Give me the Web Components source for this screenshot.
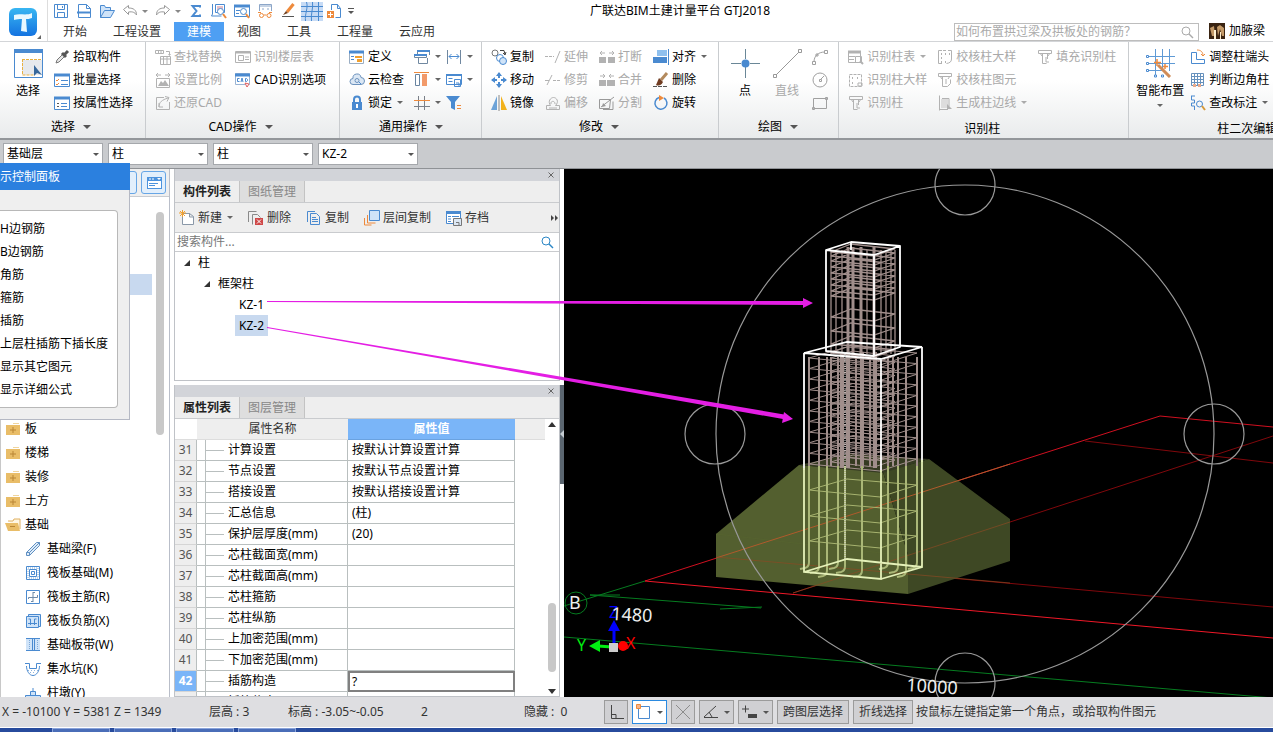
<!DOCTYPE html>
<html lang="zh-CN">
<head>
<meta charset="utf-8">
<meta name="viewport" content="width=device-width, initial-scale=1">
<title>广联达BIM土建计量平台 GTJ2018</title>
<style>
  html, body {
    margin: 0;
    height: 100%;
    overflow: hidden;
    background: #fff;
    color: #000;
    font: 12px/16px "Noto Sans", "Noto Sans CJK SC", sans-serif;
  }
</style>
</head>
<body>
<bim-app></bim-app>

<script>
(() => {
  // 16x16 artwork unless a viewBox is listed in iconBoxes
  const B = "#4a8ad0";
  const L = "#cfe3f8";
  const O = "#ee8a3c";
  const G = "#b2b2b2";
  const D = "#555";

  const icons = {
    save: `<path d="M1.5 1.5h13v13h-13zM4.5 1.5v5h7v-5M4.5 14.5v-5h7v5M9.5 3v2" stroke="${B}"/>`,
    page: `<path d="M2.5 1.5h8l4 4v9h-12zM10.5 1.5v4h4" stroke="${B}"/><path d="M1 9.5h14" stroke="${B}" stroke-width="2"/>`,
    open: `<path d="M1.5 14.5v-12h4l1 2h5v3M1.5 14.5l4-7h10l-4 7z" stroke="${B}" fill="${L}"/>`,
    undo: `<path d="M1.500 6.500l5-4v2.500c5 0 8 2 8 7-2-3-4-3.500-8-3v2.500z" stroke="#999"/>`,
    redo: `<path d="M14.500 6.500l-5-4v2.500c-5 0-8 2-8 7 2-3 4-3.500 8-3v2.500z" stroke="#999"/>`,
    sum: `<path d="M12 4.500V3H4.500l4 5-4 5H12v-1.500" stroke="${B}" stroke-width="2"/>`,
    measure: `<path d="M1.500 1v10l-1 2h10M4.500 1.500h9v8h-9z" stroke="${B}"/><path d="M6 4h6M6 6h6M6 8h4" stroke="#cc8090"/><circle cx="9.500" cy="8.500" r="3" stroke="${B}" fill="#fff"/><path d="M12 11l3 4" stroke="${O}" stroke-width="2"/>`,
    find: `<path d="M.5 2.500h15v11H.5z" stroke="${B}"/><path d="M0 3h16" stroke="${B}" stroke-width="3"/><path d="M2 7.500h4M2 10.500h3" stroke="${B}"/><circle cx="9.500" cy="8.500" r="3" stroke="${B}" fill="#fff"/><path d="M12 11l3 4" stroke="${O}" stroke-width="2"/>`,
    view: `<path d="M2.500 8V1.500h12V8M2 3h12M5 6h2M10 6h2" stroke="#8ca6c8"/><circle cx="4.500" cy="12.500" r="2" stroke="${O}"/><circle cx="12" cy="12.500" r="2" stroke="${O}"/><path d="M7 12h2.500M1 9.500h3M12 9.500h3" stroke="${O}"/>`,
    brush: `<path d="M13.500 1L7 9" stroke="${O}" stroke-width="3"/><path d="M6 8l2 2-5 2z" fill="#704020"/><path d="M2 13.500h12" stroke="${D}"/>`,
    mesh: `<path d="M0 4.500h22M0 9.500h22M0 14.500h22M5.500 0c2 6-2 12-1 19M11.500 0c1 6-2 12-1 19M17.500 0v19" stroke="${B}"/>`,
    addpage: `<path d="M5.500 7V1.500h6M9.500 14.500h5v-9l-3-4v4h3" stroke="${B}"/><path d="M1 8h7v7H1z" fill="${O}"/><path d="M4.500 9v5M2 11.500h5" stroke="#fff"/>`,
    caretbar: `<path d="M3 5.500h6" stroke="${D}"/><path d="M3 8h6l-3 3z" fill="${D}"/>`,

    select: `<path d="M.5.500h28v28H.5z" stroke="${B}" fill="#fff"/><path d="M0 0h29v4H0z" fill="${B}"/><path d="M8 11h20v15H8z" fill="#e6e9ed"/><path d="M8 10.500h20M8.500 10v16h12" stroke="#e8b040" stroke-dasharray="3 1"/><path d="M20 16v11l3-3 5 2z" fill="#37689c"/>`,
    dropper: `<path d="M2 14l1-3 6-6 2 2-6 6z" stroke="#777" fill="#e7e7e7"/><path d="M8 4l4 4M10 6l4-4" stroke="#555" stroke-width="3"/>`,
    batch: `<path d="M.5 2.500h15v12H.5z" stroke="${B}" fill="#fff"/><path d="M0 3h16" stroke="${B}" stroke-width="3"/><path d="M2 8l1 1 2-2M2 12l1 1 2-2" stroke="${O}"/><path d="M7 8.500h7M7 12.500h7" stroke="${B}"/>`,
    attr: `<path d="M.5 2.500h15v12H.5z" stroke="${B}" fill="#fff"/><path d="M0 3h16" stroke="${B}" stroke-width="3"/><path d="M3 8.500h2M3 11.500h2" stroke="${D}"/><path d="M7 8.500h6M7 11.500h6" stroke="${B}"/>`,
    replace: `<path d="M.5 1.500h8v3h-8zM3.500 2v2M6 2v2M11 2.500h3.500v3M5.500 7.500h10v8h-10zM5 10h10M8.500 8v7M12 8v7" stroke="${G}"/><path d="M13 5h3l-1.500 2z" fill="${G}"/>`,
    scale: `<path d="M1 3h5M10 3h5M3 1L1 3l2 2M13 1l2 2-2 2M1.500 6.500h13v9h-13z" stroke="${G}"/><path d="M3 14l3-5 2 2 2-3 4 6z" fill="${G}"/>`,
    restore: `<path d="M9 2.500H1.500v12h13V7M4 12c0-5 3-7 9-9M10 1.500l4 1-2 4M4 8v4h4" stroke="${G}"/>`,
    floors: `<path d="M.5 2.500h15v11H.5z" stroke="${G}"/><path d="M1 3.500h14" stroke="${G}" stroke-width="2"/><path d="M3.500 6.500h5v5h-5zM10 8h4M10 10.500h4" stroke="${G}"/>`,
    cadopt: `<path d="M.5 1.500h14v11H.5z" stroke="#9ab4d4" fill="#fff"/><path d="M0 3h15" stroke="${B}" stroke-width="3"/><path d="M4.500 6.500h-2v3h2M6 10l1-4 1 4M10.500 6.500v3h1l1-1v-1l-1-1z" stroke="${B}"/><path d="M10 11l4 1-2 3z" stroke="#e06060" fill="#fff"/>`,
    define: `<path d="M.5 2.500h14v12H.5z" stroke="#9aaec4" fill="#fff"/><path d="M0 3h15" stroke="${B}" stroke-width="3"/><path d="M2 7.500h3M2 10.500h3" stroke="${B}"/><path d="M6 7h7v2H6zM8 10h5v3H8z" fill="#f0a030"/>`,
    cloud: `<path d="M4 12.500a3 3 0 010-6 4 4 0 018-1 3.500 3.500 0 010 7z" stroke="#6c92bd" fill="#dbe7f4"/><circle cx="8" cy="8.500" r="2" stroke="#6c92bd"/><path d="M10 10l2 2" stroke="${B}"/>`,
    lock: `<path d="M5 8V4.500a3 3 0 016 0V8" stroke="${B}" stroke-width="2"/><path d="M3 7h10v8H3z" fill="${B}"/><path d="M8 9v4" stroke="#fff" stroke-width="2"/>`,
    windows: `<path d="M3.500 5V1.500h12V6M.5 5.500h12v3H.5zM4.500 9v5.500h9V9" stroke="#7088a0"/><path d="M3 2h13M0 6h13" stroke="${B}" stroke-width="2"/>`,
    dims: `<path d="M1.500 1v14M14.500 1v14" stroke="#7088a0"/><path d="M3 7.500h10M5.500 5L3 7.500l2.500 2.500M10.500 5L13 7.500 10.500 10" stroke="${B}"/>`,
    columns: `<path d="M1.500 2.500h4v11h-4z" stroke="#6884a0"/><path d="M8 2h5v12H8z" fill="#f29a6a"/><path d="M0 .5h15" stroke="${O}"/>`,
    tablesave: `<path d="M.5 2.500h15v10H.5z" stroke="${B}" fill="#fff"/><path d="M0 3h16" stroke="${B}" stroke-width="2"/><path d="M2.500 6.500h4M2.500 9.500h4M8.500 7.500h6v7h-6zM10 11h3v3" stroke="${B}"/>`,
    gridsmall: `<path d="M4.500 1v14M10.500 1v14M0 11.500h16" stroke="#7a7f88"/><path d="M0 5.500h16" stroke="${O}"/>`,
    filter: `<path d="M0 1h14L9 7v8l-4-2V7z" fill="${B}"/><path d="M11 10.500h4M11 13.500h4" stroke="${O}"/>`,
    copy2: `<circle cx="4" cy="4" r="3" stroke="#777"/><circle cx="9" cy="9" r="3.500" stroke="${B}"/><circle cx="12" cy="12" r="3.500" stroke="${B}" fill="${L}"/><path d="M9 1.500l4 0 1 4M12 4l2 2 1-3" stroke="#444"/>`,
    move: `<path d="M8 1v5M8 10v5M1 8h5M10 8h5" stroke="${B}" stroke-width="2"/><path d="M5 4l3-4 3 4zM5 12l3 4 3-4zM4 5L0 8l4 3zM12 5l4 3-4 3z" fill="${B}"/>`,
    mirror: `<path d="M6 1v14H0z" fill="#6da3d8"/><path d="M10 1v14h6z" fill="#f1b11c"/><path d="M8 0v16" stroke="#888"/>`,
    extend: `<path d="M0 7.500h9" stroke="${G}" stroke-dasharray="3 1"/><path d="M10 14L15 2" stroke="${G}"/>`,
    trim: `<path d="M2 13L7 3M0 8.500h4" stroke="${G}"/><path d="M8 8.500h8" stroke="${G}" stroke-dasharray="3 1"/>`,
    offset: `<path d="M1.500 10.500h4c-3-4 0-8 3-8s6 4 2 8h4v4h-13zM4 13h8M6 9c-1-3 4-4 4 0" stroke="${G}"/>`,
    cut: `<path d="M0 8h7v6H0zM9 8h7v6H9z" fill="${G}"/><path d="M1 4h5M10 4h5M3 2L1 4l2 2M13 2l2 2-2 2" stroke="${G}"/>`,
    merge: `<path d="M0 8h7v6H0zM8 8h8v6H8z" fill="${G}"/><path d="M1 4h5M10 4h5M4 2l2 2-2 2M12 2l-2 2 2 2" stroke="${G}"/>`,
    split: `<path d="M.5 4.500h11l-1 9H.5zM2 12L15 2M4 14.500h10v-8" stroke="#999"/><path d="M4 8l3 3-4 1z" fill="#999"/>`,
    align: `<path d="M4 1h10v6H4z" fill="#8fc0ee"/><path d="M0 8h14v6H0z" fill="${B}"/><path d="M15.500 0v16" stroke="${B}"/>`,
    erase: `<path d="M14 1L8 8" stroke="#b38a5d" stroke-width="3"/><path d="M6 6l4 4c-2 4-5 4-7 3z" fill="#703c22"/><path d="M0 14.500h15" stroke="#555" stroke-dasharray="4 1"/>`,
    rotate: `<path d="M6 2.500a6 6 0 105 .5" stroke="${B}" stroke-width="1.500"/><path d="M6 0l5 3-5 3z" fill="${O}"/>`,
    point: `<path d="M14.500 0v10M14.500 18v11M0 14.500h10M19 14.500h10" stroke="#6a8797"/><circle cx="14.500" cy="14.500" r="4" fill="${B}"/>`,
    line: `<path d="M3 26L26 3M.5 25.500h3v3h-3zM25.500.500h3v3h-3z" stroke="#999"/>`,
    arc: `<path d="M2 13c0-6 4-10 11-10M.5 12.500h3v3h-3zM12.500 1.500h3v3h-3zM4 5h2v2H4z" stroke="#a0a0a0"/>`,
    circle: `<circle cx="8" cy="8" r="7" stroke="#a0a0a0"/><path d="M7.500 7.500h2v2h-2zM9 7l3-3" stroke="#a0a0a0"/>`,
    rect: `<path d="M1.500 3.500h13v10h-13zM.5 12.500h2v2h-2zM13.500 2.500h2v2h-2z" stroke="#a0a0a0"/>`,
    coltable: `<path d="M.5 2.500h12v11H.5zM0 7.500h7M0 10.500h6" stroke="${G}"/><path d="M0 3h13" stroke="${G}" stroke-width="3"/><path d="M7.500 7.500h6v6h-6z" stroke="${G}"/><path d="M12 12l3 3" stroke="${G}" stroke-width="2"/>`,
    colsample: `<path d="M1.500 2.500h12v12h-12z" stroke="${G}" stroke-dasharray="3 1"/><path d="M4 6h1M9 6h1M4 11h1" stroke="${G}" stroke-width="2"/><path d="M10 11h4v3h-4z" stroke="${G}"/>`,
    coltee: `<path d="M1.500 1.500h13v3h-13zM5.500 5v9.500h4M10.500 5v5M3 4l2 3M13 4l-2 3M9 8v5h3" stroke="${G}"/>`,
    coltee2: `<path d="M1.500 1.500h13v3h-13zM5.500 5v9.500h5l3-3v-4M9 7v5M3 4l2 3M13 4l-2 3" stroke="${G}"/>`,
    checksample: `<path d="M5 1.500H1.500v13H5M11 1.500h3.500V10c0 3-2 4-5 4.500M6 1.500h3" stroke="${G}"/><path d="M4 5h1M8 5h1M12 5h1M4 9h1M4 13h1M8 13h1" stroke="${G}" stroke-width="2"/>`,
    genline: `<path d="M2.500.500v15M2 14.500h9M5 3.500h7v8" stroke="${G}"/><path d="M4 4h7v9H4z" fill="#ddd"/><path d="M10 9l5 5h-5z" fill="${G}"/>`,
    smart: `<path d="M9.500 0v26M16.500 0v20M23.500 0v22M1 7.500h28M1 14.500h28M1 21.500h18" stroke="#5f9ad5"/><path d="M.5 6.500h2v2h-2zM.5 13.500h2v2h-2zM.5 20.500h2v2h-2zM8.500 26h2v2h-2zM15.500 26h2v2h-2z" fill="#fff" stroke="${B}"/><path d="M12 16l12 12" stroke="#d08c58" stroke-width="3"/><path d="M11 10v7M8 13.500h7M19 15v5M17 17.500h5" stroke="${O}" stroke-width="1.500"/>`,
    adjust: `<path d="M1.500 3.500h5v7h8v4h-13z" stroke="${B}"/><path d="M7 1c4 0 6 2 6 6M11 5l2 2 2-2" stroke="${O}"/>`,
    corner: `<path d="M1.500 1.500h12v12h-12zM4.500 1v12M7.500 1v12M10.500 1v12M1 4.500h12M1 7.500h12M1 10.500h12" stroke="#6691bd"/><path d="M3 12h3v3H3zM8 12h3v3H8z" fill="#e8a98a"/>`,
    note: `<path d="M1.500 1v4h3v3h-3v3h3v4M1 1h4" stroke="${B}"/><circle cx="9.500" cy="9" r="3" stroke="${B}"/><path d="M12 11l3 4" stroke="#d79a3a" stroke-width="2"/>`,

    newdoc: `<path d="M3.500 3.500h7l4 3v8h-11zM10.500 3v4h4" stroke="#8a98a8" fill="#fff"/><path d="M0 3h7M3.500 0v7M1 1l5 5M6 1L1 6" stroke="#f0a030"/>`,
    deldoc: `<path d="M.5 12V1.500h8M4.500 14.500v-10h5l3 3" stroke="#8a8a8a"/><path d="M7 8h8v7H7z" fill="#cf4848"/><path d="M9 9.500l4 4M13 9.500l-4 4" stroke="#fff"/>`,
    copydoc: `<path d="M1.500 12V1.500H9M4.500 3.500h6l3 3v8h-9zM6 7.500h4M6 9.500h6M6 11.500h6" stroke="${B}"/>`,
    layercopy: `<path d="M5.500.5h10v10h-10z" stroke="${B}" fill="${L}"/><path d="M3.500 5v8h8M.5 8v7h7" stroke="${O}"/>`,
    archive: `<path d="M.5 1.500h14v12H.5z" stroke="${B}" fill="#fff"/><path d="M0 2.500h15" stroke="${B}" stroke-width="3"/><path d="M2 6.500h3M2 9h3M2 11.500h3M6 6.500h7" stroke="${B}"/><path d="M7.500 8.500h8v7h-8zM10 12.500h3v3" stroke="#777" fill="#dde8f4"/>`,
    search: `<circle cx="7" cy="7" r="4" stroke="currentColor"/><path d="M10 10l4 4" stroke="currentColor" stroke-width="1.500"/>`,
    folder: `<path d="M1 4h14v10H1z" fill="#e9bd68"/><path d="M8 2h6v1H8z" fill="#f0d59d"/><path d="M8 6v6M5 9h6" stroke="#b98534"/>`,
    folderopen: `<path d="M3 4h5l1-2h6v10" stroke="#e0b060" fill="#fff6e2"/><path d="M0 6h13l2 8H3z" fill="#e9bd68"/><path d="M5 9.500h5" stroke="#b98534"/>`,
    beam: `<path d="M1.500 14.500v-3l10-10h3v3l-10 10zM1.500 11.500h3v3M4.500 11.500l10-10" stroke="#5f8fc2" fill="#e0edf9"/>`,
    raft: `<path d="M1.500 1.500h13v13h-13zM4.500 4.500h7v7h-7z" stroke="${B}"/><path d="M3 3h10v10H3z" stroke="#7faad8" stroke-dasharray="1 1"/><path d="M6.500 6.500h3v3h-3z" stroke="${B}"/>`,
    rebar: `<path d="M1.500 1.500h13v13h-13z" stroke="${B}"/><path d="M8 3v10M3.500 10V8.500h9V6M8 3.500h2M6 12.500h2" stroke="#6f8ba8"/>`,
    negbar: `<path d="M3.500 3.500v-2h12v12h-2M1.500 3.500h12v11h-12z" stroke="${B}" fill="${L}"/><path d="M5.500 12V6h-2M9.500 12V6h2M3 10.500h9" stroke="${B}"/>`,
    strip: `<path d="M1 2h14v11H1z" fill="${L}"/><path d="M1 1.500h14M1 13.500h14M7.500 2v11M9.500 2v11" stroke="${B}"/><path d="M4.500 3v10M12.500 3v10" stroke="#7faad8" stroke-dasharray="1 1"/>`,
    pit: `<path d="M0 2.500h4.500v5h7v-5H16M1.500 5c0 5 3 9.500 6.500 9.500s6.500-4.500 6.500-9.500" stroke="${B}"/><path d="M3 9.500h10M5 11.500h6" stroke="#8fb5dd" stroke-dasharray="1 2"/>`,
    pier: `<path d="M.5 10.500h15v4H.5zM5.500 10V6.500h5V10M8 3v3" stroke="${B}" fill="${L}"/>`,
    panel: `<path d="M1 2h15v12H1z" fill="#4d93dd"/><path d="M2 6h13v7H2z" fill="#fff"/><path d="M3 4h2M6 4h2" stroke="#fff"/><path d="M11 3h4l-2 2z" fill="#fff"/><path d="M3 8.500h9M3 10.500h6" stroke="#4d93dd"/>`,
    ortho: `<path d="M3.500 1v13.500H16M4 10.500h4v4" stroke="#444"/>`,
    box: `<path d="M2.500 2.500h11v12h-11z" stroke="${B}"/><path d="M.5.500h4v4h-4z" fill="#f8b48a" stroke="${O}"/>`,
    cross: `<path d="M1 1l14 14M15 1L1 15" stroke="#8c8c8c"/>`,
    angle: `<path d="M1 13.500h14M1 13L13 2M6 8l3 5" stroke="#444"/>`,
    plusbar: `<path d="M0 5h7M3.500 1.500v7" stroke="#444"/><path d="M6 10h9v4H6z" fill="#444"/>`
  };

  const iconBoxes = {
    mesh: "0 0 22 19",
    caretbar: "0 0 12 16",
    select: "0 0 29 29",
    point: "0 0 29 29",
    line: "0 0 29 29",
    smart: "0 0 29 29"
  };

  const define = (name, render) => {
    customElements.define(name, class extends HTMLElement {
      connectedCallback() {
        if (this.shadowRoot) return;
        this.attachShadow({ mode: "open" }).innerHTML = render(this);
      }
    });
  };

  define("bim-icon", (el) => {
    const name = el.getAttribute("name");
    const box = iconBoxes[name] || "0 0 16 16";
    const [, , w, h] = box.split(" ");
    return `
      <style>
        :host { display: block; flex: none; }
        svg { display: block; }
      </style>
      <svg width="${w}" height="${h}" viewBox="${box}" fill="none" aria-hidden="true">${icons[name]}</svg>`;
  });

  define("tool-button", (el) => {
    const icon = el.getAttribute("icon");
    const off = el.hasAttribute("off");
    return `
      <style>
        :host { display: block; flex: none; }
        button {
          display: flex;
          align-items: center;
          gap: 3px;
          padding: 0;
          border: 0;
          background: none;
          color: ${off ? "#a9a9a9" : "inherit"};
          font: inherit;
          white-space: nowrap;
        }
        :host([big]) button { flex-direction: column; gap: 5px; margin: auto; }
        .caret { margin: 0 0 0 2px; border: 3px solid transparent; border-top-color: #666; border-bottom: 0; }
        :host([big]) .caret { margin: 0; }
        :host([off]) .caret { border-top-color: #aaa; }
      </style>
      <button ${off ? "disabled" : ""} aria-label="${el.textContent.trim() || icon}">
        <bim-icon name="${icon}"></bim-icon>
        ${el.textContent.trim() ? "<slot></slot>" : ""}
        ${el.hasAttribute("drop") ? '<span class="caret"></span>' : ""}
      </button>`;
  });

  define("ribbon-group", (el) => `
    <style>
      :host {
        display: flex;
        flex: none;
        flex-direction: column;
        box-sizing: border-box;
        padding: 3px var(--end, 11px) 0 9px;
        border-right: 1px solid #c9cccf;
      }
      :host(:last-child) { border-right: 0; padding-left: 7px; }
      .tools { display: flex; gap: var(--gap, 11px); height: 72px; }
      .name { display: flex; align-items: center; justify-content: center; gap: 8px; padding-top: 2px; }
      :host(:not([more])) .name { padding-top: 4px; }
      .name i { border: 4px solid transparent; border-top-color: #555; border-bottom: 0; }
    </style>
    <div class="tools"><slot></slot></div>
    <div class="name">${el.getAttribute("label")}${el.hasAttribute("more") ? "<i></i>" : ""}</div>`);

  define("ribbon-column", () => `
    <style>
      :host { display: grid; grid-template-rows: repeat(3, 23px); align-items: center; align-content: start; }
    </style>
    <slot></slot>`);

  define("app-header", () => {
    const tabs = ["开始", "工程设置", "建模", "视图", "工具", "工程量", "云应用"];
    return `
      <style>
        :host { display: grid; grid-template-columns: 48px 1fr; height: 41px; border-bottom: 1px solid #d3d5d8; background: #fff; }
        .logo { padding: 7px 0 0 8px; border-right: 1px solid #ddd; }
        .logo svg { display: block; }
        .quick, .end { display: flex; align-items: center; }
        .quick { height: 22px; padding-left: 5px; gap: 7px; }
        .end { gap: 3px; margin-left: -2px; }
        .hot { background: #c7dbf5; }
        .caret { border: 3px solid transparent; border-top-color: #888; border-bottom: 0; margin-left: -3px; }
        h1 { margin: 0 0 0 226px; font: inherit; white-space: nowrap; }
        .row { display: flex; height: 19px; padding-left: 2px; }
        nav { display: flex; flex: 1; }
        nav a { padding: 2px 13px 1px; color: #333; text-decoration: none; white-space: nowrap; }
        nav a[aria-current] { background: #4e9ff3; color: #fff; }
        .ask { display: flex; box-sizing: border-box; width: 245px; height: 18px; border: 1px solid #bdbdbd; margin-top: 1px; color: #aaa; }
        input { flex: 1; min-width: 0; padding: 0 1px; border: 0; background: none; font: inherit; }
        input::placeholder { color: #aaa; opacity: 1; }
        .ask bim-icon { margin-right: 3px; }
        .user { display: flex; gap: 4px; padding: 1px 8px 0 10px; }
      </style>
      <div class="logo">
        <svg width="34" height="33" viewBox="0 0 34 33">
          <defs><linearGradient id="g" x2="0" y2="1"><stop stop-color="#38b6f2"/><stop offset="1" stop-color="#1473e0"/></linearGradient></defs>
          <rect x="1" y="1" width="28" height="28" rx="6" fill="url(#g)"/>
          <path d="M6 8c6-2 12 1 18-2v5c-3 1-4 1-6 1l1 13-6-1 1-12c-3 0-5 0-8 1z" fill="#e8f8ff"/>
          <path d="M33 28v4h-4z" fill="#666"/>
        </svg>
      </div>
      <div>
        <div class="quick">
          <bim-icon name="save"></bim-icon><bim-icon name="page"></bim-icon><bim-icon name="open"></bim-icon>
          <bim-icon name="undo"></bim-icon><span class="caret"></span>
          <bim-icon name="redo"></bim-icon><span class="caret"></span>
          <bim-icon name="sum"></bim-icon><bim-icon name="measure"></bim-icon><bim-icon name="find"></bim-icon>
          <bim-icon name="view"></bim-icon><bim-icon name="brush"></bim-icon>
          <div class="end">
            <bim-icon class="hot" name="mesh"></bim-icon><bim-icon name="addpage"></bim-icon>
            <bim-icon name="caretbar"></bim-icon>
          </div>
          <h1>广联达BIM土建计量平台 GTJ2018</h1>
        </div>
        <div class="row">
          <nav>${tabs.map((t) => `<a href="#"${t === "建模" ? ' aria-current="page"' : ""}>${t}</a>`).join("")}</nav>
          <label class="ask"><input aria-label="搜索帮助" placeholder="如何布置拱过梁及拱板处的钢筋？"><bim-icon name="search"></bim-icon></label>
          <div class="user">
            <svg width="16" height="16" viewBox="0 0 16 16"><path d="M0 0h16v16H0z" fill="#3a2412"/><path d="M1 5l4-2 1 10H3zM8 4l3-2 4 3v8h-2l-2-7-2 7z" fill="#c49a68"/><path d="M5 7h2v9H5zM11 9h1v7h-1z" fill="#fff0d0"/></svg>
            <span>加腋梁</span>
          </div>
        </div>
      </div>`;
  });

  define("app-ribbon", () => `
    <style>
      :host {
        display: flex;
        height: 96px;
        overflow: hidden;
        border-bottom: 2px solid #93969a;
        background: linear-gradient(#fff 40%, #e9ebec);
      }
      .pair { display: flex; gap: 5px; }
      .big { padding-top: 4px; min-width: 34px; }
      .wide { min-width: 38px; }
      .last { width: 48px; }
    </style>
    <ribbon-group label="选择" more style="--gap: 7px; --end: 12px">
      <div class="big wide"><tool-button big icon="select">选择</tool-button></div>
      <ribbon-column>
        <tool-button icon="dropper">拾取构件</tool-button>
        <tool-button icon="batch">批量选择</tool-button>
        <tool-button icon="attr">按属性选择</tool-button>
      </ribbon-column>
    </ribbon-group>
    <ribbon-group label="CAD操作" more style="--gap: 13px; --end: 13px">
      <ribbon-column>
        <tool-button off icon="replace">查找替换</tool-button>
        <tool-button off icon="scale">设置比例</tool-button>
        <tool-button off icon="restore">还原CAD</tool-button>
      </ribbon-column>
      <ribbon-column>
        <tool-button off icon="floors">识别楼层表</tool-button>
        <tool-button icon="cadopt">CAD识别选项</tool-button>
      </ribbon-column>
    </ribbon-group>
    <ribbon-group label="通用操作" more style="--gap: 10px; --end: 8px">
      <ribbon-column>
        <tool-button icon="define">定义</tool-button>
        <tool-button icon="cloud">云检查</tool-button>
        <tool-button drop icon="lock">锁定</tool-button>
      </ribbon-column>
      <div class="pair">
        <ribbon-column>
          <tool-button drop icon="windows"></tool-button>
          <tool-button drop icon="columns"></tool-button>
          <tool-button drop icon="gridsmall"></tool-button>
        </ribbon-column>
        <ribbon-column>
          <tool-button drop icon="dims"></tool-button>
          <tool-button drop icon="tablesave"></tool-button>
          <tool-button icon="filter"></tool-button>
        </ribbon-column>
      </div>
    </ribbon-group>
    <ribbon-group label="修改" more>
      <ribbon-column>
        <tool-button icon="copy2">复制</tool-button>
        <tool-button icon="move">移动</tool-button>
        <tool-button icon="mirror">镜像</tool-button>
      </ribbon-column>
      <ribbon-column>
        <tool-button off icon="extend">延伸</tool-button>
        <tool-button off icon="trim">修剪</tool-button>
        <tool-button off icon="offset">偏移</tool-button>
      </ribbon-column>
      <ribbon-column>
        <tool-button off icon="cut">打断</tool-button>
        <tool-button off icon="merge">合并</tool-button>
        <tool-button off icon="split">分割</tool-button>
      </ribbon-column>
      <ribbon-column>
        <tool-button drop icon="align">对齐</tool-button>
        <tool-button icon="erase">删除</tool-button>
        <tool-button icon="rotate">旋转</tool-button>
      </ribbon-column>
    </ribbon-group>
    <ribbon-group label="绘图" more style="--gap: 8px; --end: 10px">
      <div class="big"><tool-button big icon="point">点</tool-button></div>
      <div class="big"><tool-button big off icon="line">直线</tool-button></div>
      <ribbon-column>
        <tool-button off icon="arc"></tool-button>
        <tool-button off icon="circle"></tool-button>
        <tool-button off icon="rect"></tool-button>
      </ribbon-column>
    </ribbon-group>
    <ribbon-group label="识别柱" style="--gap: 10px; --end: 12px">
      <ribbon-column>
        <tool-button off drop icon="coltable">识别柱表</tool-button>
        <tool-button off icon="colsample">识别柱大样</tool-button>
        <tool-button off icon="coltee">识别柱</tool-button>
      </ribbon-column>
      <ribbon-column>
        <tool-button off icon="checksample">校核柱大样</tool-button>
        <tool-button off icon="coltee2">校核柱图元</tool-button>
        <tool-button off drop icon="genline">生成柱边线</tool-button>
      </ribbon-column>
      <ribbon-column>
        <tool-button off icon="coltee">填充识别柱</tool-button>
      </ribbon-column>
    </ribbon-group>
    <ribbon-group label="柱二次编辑" style="--gap: 6px; width: 240px">
      <div class="big last"><tool-button big drop icon="smart">智能布置</tool-button></div>
      <ribbon-column>
        <tool-button icon="adjust">调整柱端头</tool-button>
        <tool-button icon="corner">判断边角柱</tool-button>
        <tool-button drop icon="note">查改标注</tool-button>
      </ribbon-column>
    </ribbon-group>`);

  define("option-bar", () => {
    const values = [["楼层", "基础层"], ["构件类型", "柱"], ["构件分类", "柱"], ["构件", "KZ-2"]];
    return `
      <style>
        :host { display: flex; gap: 5px; padding: 3px; height: 22px; border-bottom: 1px solid #8f9296; background: #c9cbce; }
        label { display: grid; width: 100px; align-items: center; }
        select, i { grid-area: 1 / 1; }
        select {
          box-sizing: border-box;
          width: 100%;
          height: 22px;
          padding: 0 3px;
          border: 1px solid #a5a8ac;
          border-radius: 0;
          appearance: none;
          background: #fff;
          color: #000;
          font: inherit;
        }
        i { justify-self: end; margin-right: 4px; border: 3px solid transparent; border-top-color: #555; border-bottom: 0; pointer-events: none; }
      </style>
      ${values.map(([n, v]) => `<label><select aria-label="${n}"><option>${v}</option></select><i></i></label>`).join("")}`;
  });

  define("display-panel", () => {
    const rows = ["H边钢筋", "B边钢筋", "角筋", "箍筋", "插筋", "上层柱插筋下插长度", "显示其它图元", "显示详细公式"];
    return `
      <style>
        :host { display: block; box-sizing: border-box; border-right: 1px solid #b5b9c4; border-bottom: 1px solid #b5b9c4; background: #efefef; }
        header { padding: 6px 0 5px; margin-right: -1px; background: #2b80df; color: #fff; white-space: nowrap; }
        ul { margin: 20px 11px 11px 0; padding: 6px 0; border: 1px solid #b8b8b8; border-left: 0; border-radius: 0 4px 4px 0; background: #fff; list-style: none; }
        li { line-height: 23px; white-space: nowrap; }
      </style>
      <header>示控制面板</header>
      <ul>${rows.map((r) => `<li>${r}</li>`).join("")}</ul>`;
  });

  define("component-nav", () => {
    const groups = [["folder", "板"], ["folder", "楼梯"], ["folder", "装修"], ["folder", "土方"], ["folderopen", "基础"]];
    const items = [["beam", "基础梁(F)"], ["raft", "筏板基础(M)"], ["rebar", "筏板主筋(R)"], ["negbar", "筏板负筋(X)"],
      ["strip", "基础板带(W)"], ["pit", "集水坑(K)"], ["pier", "柱墩(Y)"]];
    const row = (cls) => ([icon, text]) => `<li class="${cls}"><bim-icon name="${icon}"></bim-icon>${text}</li>`;
    return `
      <style>
        :host { display: flex; flex-direction: column; box-sizing: border-box; border-right: 1px solid #b9bec9; border-left: 1px solid #c8c8c8; overflow: hidden; background: #fff; }
        header { display: flex; justify-content: flex-end; gap: 4px; padding: 2px 3px 2px 0; border-bottom: 1px solid #c8ccd2; background: #efefef; }
        button { display: grid; place-items: center; box-sizing: border-box; width: 25px; height: 23px; padding: 0; border: 1px solid #67a6e6; border-radius: 3px; background: #e2effc; }
        .body { display: flex; flex: 1; min-height: 0; justify-content: space-between; }
        ul { flex: 1; margin: 0; padding: 0; list-style: none; }
        li { display: flex; align-items: center; gap: 4px; height: 24px; padding-left: 4px; white-space: nowrap; }
        .sub { padding-left: 24px; gap: 6px; }
        .current { height: 21px; margin: 77px 0 122px; background: #c8d9ef; }
        .thumb { width: 8px; height: 223px; margin: 15px 5px 0 4px; border-radius: 4px; background: #c8c8c8; }
      </style>
      <header>
        <button aria-label="列表"></button>
        <button aria-label="面板"><bim-icon name="panel"></bim-icon></button>
      </header>
      <div class="body">
        <ul><li class="current"></li>${groups.map(row("")).join("")}${items.map(row("sub")).join("")}</ul>
        <div class="thumb"></div>
      </div>`;
  });

  define("dock-panel", (el) => {
    const [on, off] = el.getAttribute("tabs").split(",");
    return `
      <style>
        :host { display: flex; flex-direction: column; box-sizing: border-box; min-height: 0; border: 1px solid #bfc2c7; border-top: 0; overflow: hidden; background: #fff; }
        .bar { display: flex; flex: none; align-items: center; justify-content: flex-end; height: 12px; background: #d2d4d9; }
        .bar button { display: flex; padding: 0 5px 0 0; border: 0; background: none; }
        .tabs { display: flex; flex: none; height: 21px; border-bottom: 1px solid #c9cbce; background: #eee; }
        .tabs button { padding: 0 8px; border: 0; background: #eee; color: #222; font: inherit; font-weight: bold; }
        .tabs .off { border: solid #c3c3c3; border-width: 0 1px; background: #dedede; color: #888; font-weight: normal; }
      </style>
      <div class="bar"><button aria-label="关闭"><svg width="6" height="6" viewBox="0 0 6 6"><path d="M.5.5l5 5M5.500.500l-5 5" stroke="#666"/></svg></button></div>
      <div class="tabs"><button>${on}</button><button class="off">${off}</button></div>
      <slot></slot>`;
  });

  define("component-list", () => `
    <style>
      :host { display: block; flex: 1; }
      .tools { display: flex; align-items: center; gap: 15px; height: 29px; padding: 0 0 0 4px; border-bottom: 1px solid #c9cbce; background: #eee; color: #333; }
      .more { margin-left: auto; display: flex; gap: 1px; padding-right: 1px; }
      .more i { border: 3px solid transparent; border-left-color: #444; border-right: 0; }
      .find { display: flex; align-items: center; height: 18px; border-bottom: 1px solid #c9cbce; color: #2b86c5; }
      .find bim-icon { margin-right: 4px; }
      input { flex: 1; min-width: 0; padding: 0 2px; border: 0; outline: 0; background: none; font: inherit; }
      input::placeholder { color: #777; opacity: 1; }
      ul { margin: 0; padding: 0; list-style: none; line-height: 21px; }
      li { display: flex; align-items: center; gap: 8px; padding-left: 9px; }
      .l2 { padding-left: 29px; }
      .l3 { padding-left: 60px; }
      .l3 span { padding: 0 4px; }
      .on { background: #c8d9ef; }
      .tri { border: 3px solid transparent; border-right-color: #333; border-bottom-color: #333; }
    </style>
    <div class="tools">
      <tool-button drop icon="newdoc">新建</tool-button>
      <tool-button icon="deldoc">删除</tool-button>
      <tool-button icon="copydoc">复制</tool-button>
      <tool-button icon="layercopy">层间复制</tool-button>
      <tool-button icon="archive">存档</tool-button>
      <span class="more"><i></i><i></i></span>
    </div>
    <label class="find"><input aria-label="搜索构件" placeholder="搜索构件..."><bim-icon name="search"></bim-icon></label>
    <ul>
      <li><i class="tri"></i>柱</li>
      <li class="l2"><i class="tri"></i>框架柱</li>
      <li class="l3"><span>KZ-1</span></li>
      <li class="l3"><span class="on">KZ-2</span></li>
    </ul>`);

  define("property-list", () => {
    const rows = [
      ["计算设置", "按默认计算设置计算"], ["节点设置", "按默认节点设置计算"], ["搭接设置", "按默认搭接设置计算"],
      ["汇总信息", "(柱)"], ["保护层厚度(mm)", "(20)"], ["芯柱截面宽(mm)", ""], ["芯柱截面高(mm)", ""],
      ["芯柱箍筋", ""], ["芯柱纵筋", ""], ["上加密范围(mm)", ""], ["下加密范围(mm)", ""], ["插筋构造", "?"], ["插筋信息", ""]
    ];
    return `
      <style>
        :host { display: flex; flex: 1; min-height: 0; overflow: hidden; }
        .sheet { flex: 1; min-width: 0; overflow: hidden; }
        table { width: 100%; border-collapse: separate; border-spacing: 0; table-layout: fixed; }
        .n { width: 22px; }
        .t { width: 9px; }
        .v { width: 167px; }
        .r { width: 30px; }
        th, td { box-sizing: border-box; height: 21px; padding: 0; line-height: 16px; text-align: left; white-space: nowrap; border-right: 1px solid #b9bfbf; border-bottom: 1px solid #b9bfbf; }
        thead th { background: #eee; color: #333; font-weight: normal; text-align: center; border-right: 0; border-bottom-color: #ddd; }
        thead .corner { background: #fff; }
        thead .hot { background: #7ab5f8; color: #fff; font-weight: bold; border-color: #6aa2e0; }
        tbody th { background: #eee; color: #555; font-weight: normal; text-align: center; border-bottom-color: #d5d5d5; }
        tbody .hot { background: #7ab5f8; color: #fff; font-weight: bold; }
        td:last-child { border: 0; }
        .name { display: flex; align-items: center; gap: 4px; }
        .name::before { content: ""; width: 18px; border-top: 1px solid #b9bfbf; }
        .val { padding-left: 4px; }
        .edit { border: 2px solid #808080; padding-left: 2px; }
        .scroll { display: flex; flex-direction: column; align-items: center; justify-content: space-between; width: 14px; padding: 3px 0 2px; box-sizing: border-box; }
        .scroll i { border: 4px solid transparent; border-bottom: 5px solid #333; border-top: 0; }
        .scroll i:last-child { border-bottom: 0; border-top: 5px solid #333; }
        .scroll b { width: 8px; height: 69px; margin-top: 158px; border-radius: 4px; background: #c8c8c8; }
      </style>
      <div class="sheet">
        <table>
          <colgroup><col class="n"><col class="t"><col><col class="v"><col class="r"></colgroup>
          <thead><tr><th class="corner"></th><th colspan="2">属性名称</th><th class="hot">属性值</th><th></th></tr></thead>
          <tbody>
            ${rows.map(([name, value], i) => {
              const on = i === 11;
              return `<tr><th${on ? ' class="hot"' : ""}>${i === 12 ? "" : 31 + i}</th><td></td>
                <td><span class="name">${name}</span></td>
                <td class="${on ? "edit" : "val"}">${value}</td><td></td></tr>`;
            }).join("")}
          </tbody>
        </table>
      </div>
      <div class="scroll"><i></i><b></b><i></i></div>`;
  });

  // wireframe helpers: a ring is the closed quad left, front, right, back
  const ring = (q, y) => `M${q[0][0]} ${q[0][1] + y}L${q.slice(1).map(([x, dy]) => `${x} ${dy + y}`).join("L")}Z`;
  const bars = (list, top, bottom) => list.map((x) => `M${x} ${top}V${bottom}`).join("");

  define("model-view", () => {
    const up = [[831, 8], [874, 12], [895, 5], [851, 0]];
    const low = [[809, 11], [880, 18], [917, 6], [847, 0]];
    const core = [[831, 8], [874, 13], [895, 6], [853, 1]];
    const upRings = [244, 248, 253, 259, 265, 271, 277, 283, 288, 309, 323, 336, 345].map((y) => ring(up, y)).join("");
    const lowRings = Array.from({ length: 11 }, (_, i) => ring(low, 347 + i * 10.6)).join("");
    const coreRings = Array.from({ length: 17 }, (_, i) => ring(core, 350 + i * 6.5)).join("");
    const footRings = [479, 505, 530].map((y) => ring(low, y)).join("");
    const foot = [809, 819, 827, 838, 845, 862, 888, 898, 906, 917]
      .map((x, i) => `M${x} 466V${562 + (i % 3) * 4}q0 5 -4 6l-5 1`).join("");
    return `
      <style>
        :host { display: block; overflow: hidden; background: #000; }
        svg { display: block; width: 100%; height: 100%; }
        text { font: 18px "Noto Sans", "Noto Sans CJK SC", sans-serif; fill: #eee; }
        .axis { font-size: 16px; }
      </style>
      <svg viewBox="564 169 709 528" preserveAspectRatio="xMinYMin slice" fill="none" role="img" aria-label="三维视图">
        <path d="M645 581L1160 416L1273 427" stroke="#d01020"/>
        <path d="M645 581L1273 638" stroke="#f01828"/>
        <path d="M793 593L1273 436M1085 441L1273 463M716 557L1273 607" stroke="#80080c"/>
        <path d="M564 606L645 581M590 595L761 608M590 595h30M720 609l42-2M564 637L1273 698" stroke="#067c20"/>
        <circle cx="576" cy="603" r="11" stroke="#067c20"/>

        <path d="M716 534L799 465L883 472L908 555V594L716 577Z" fill="#535f2f"/>
        <path d="M883 472L929 459L1010 519V561L908 594V555Z" fill="#3e4824"/>
        <path d="M799 465L850 454L929 459L883 473Z" fill="#353b22"/>
        <path d="M716 534L908 556" stroke="#58662f" stroke-opacity=".5"/>
        <path d="M716 558L1010 464" stroke="#b05a2c"/>
        <path d="M716 557L1010 583M793 593L1010 522" stroke="#8a4a24" stroke-opacity=".7"/>

        <path d="${upRings}" stroke="#a08e8b" stroke-width="1.300"/>
        <path d="${bars([831, 836, 842, 861, 867, 881, 886, 891, 895], 250, 354)}" stroke="#a08e8b" stroke-width="1.300"/>
        <path d="${bars([848, 853, 861, 874], 247, 356)}" stroke="#a08e8b" stroke-width="3"/>
        <path d="${lowRings}${coreRings}" stroke="#a08e8b"/>
        <path d="${bars([809, 819, 827, 831, 838, 856, 870, 888, 893, 898, 906, 917], 357, 466)}" stroke="#a08e8b" stroke-width="2"/>
        <path d="${bars([842, 848, 862, 875], 352, 468)}" stroke="#a08e8b" stroke-width="4"/>
        <path d="${footRings}" stroke="#a7b36f"/>
        <path d="${foot}" stroke="#aab777" stroke-width="2"/>

        <path d="M826 250L851 242L900 246L874 255ZM826 250V351L874 356V255M874 356L900 347V246M851 242v8" stroke="#fff" stroke-width="1.800" stroke-linejoin="round"/>
        <path d="M804 353L847 342L922 347L881 359ZM804 353V470M881 359V472M922 347V462" stroke="#fff" stroke-width="1.800"/>
        <path d="M804 468V572L881 579V470M881 579L922 567V460M804 572L847 559L922 567" stroke="#e4f0b8" stroke-width="1.800"/>
        <path d="M845 352V559" stroke="#ddd" stroke-dasharray="1 1"/>

        <g stroke="#999" stroke-width="1.200">
          <circle cx="965" cy="434" r="249"/>
          <circle cx="965" cy="185" r="30"/>
          <circle cx="965" cy="683" r="30"/>
          <circle cx="715" cy="434" r="30"/>
          <circle cx="1214" cy="434" r="30"/>
        </g>

        <text class="axis" x="609" y="618" style="fill: #00f">Z</text>
        <text class="axis" x="577" y="651" style="fill: #0e1">Y</text>
        <text x="569" y="609">B</text>
        <text x="611" y="620" transform="rotate(3 611 620)">1480</text>
        <text x="906" y="691" transform="rotate(4 906 691)">10000</text>
        <path d="M614 645V628" stroke="#00f" stroke-width="3"/>
        <path d="M608 631l6-11 6 11z" fill="#00f"/>
        <path d="M612 647l-14-1" stroke="#0e1" stroke-width="3"/>
        <path d="M600 640l-11 6 11 6z" fill="#0e1"/>
        <circle cx="623" cy="646" r="5" fill="#f00"/>
        <path d="M609 643h9v9h-9z" fill="#ccc"/>
        <text class="axis" x="626" y="649" style="fill: #f00">X</text>
      </svg>`;
  });

  define("call-outs", () => `
    <style>
      :host { display: block; pointer-events: none; }
      svg { display: block; width: 100%; height: 100%; }
    </style>
    <svg viewBox="0 169 1273 528" preserveAspectRatio="xMinYMin slice" fill="#e41ee4" aria-hidden="true">
      <path d="M267 301L804 301V305L267 302ZM803 298L813 303L803 308Z"/>
      <path d="M267 327L784 414.500L783 419L267 328ZM784 412L793 419L782 423Z"/>
    </svg>`);

  define("work-area", () => `
    <style>
      :host { display: grid; position: relative; grid-template-columns: 170px 386px minmax(0, 1fr); min-height: 0; background: #fff; column-gap: 4px; }
      .docks { display: grid; grid-template-rows: 212px minmax(0, 1fr); row-gap: 4px; min-height: 0; }
      component-nav, model-view { min-height: 0; }
      .view { display: grid; grid-template-columns: minmax(0, 1fr); min-height: 0; }
      display-panel { position: absolute; left: 0; top: -6px; width: 130px; z-index: 2; }
      call-outs { position: absolute; inset: 0; z-index: 3; }
      .grip { position: absolute; left: 560px; top: 216px; width: 4px; height: 99px; background: #5b6670; }
      .grip::after { content: ""; display: block; margin-top: 45px; border: 4px solid transparent; border-left: 0; border-right-color: #c4cbd2; }
    </style>
    <component-nav></component-nav>
    <div class="docks">
      <dock-panel tabs="构件列表,图纸管理"><component-list></component-list></dock-panel>
      <dock-panel tabs="属性列表,图层管理"><property-list></property-list></dock-panel>
    </div>
    <div class="view"><model-view></model-view></div>
    <div class="grip"></div>
    <display-panel></display-panel>
    <call-outs></call-outs>`);

  define("status-bar", () => `
    <style>
      :host { display: grid; grid-template-columns: 207px 79px 133px 103px 80px auto 1fr; align-items: center; height: 30px; padding-left: 2px; border-bottom: 1px solid #fff; background: #dedee1; color: #333; }
      span { white-space: pre; }
      .tools { display: flex; gap: 4px; margin-right: 3px; }
      button { display: flex; align-items: center; justify-content: center; gap: 5px; box-sizing: border-box; height: 24px; padding: 0 3px; border: 1px solid #9b9b9b; background: #d0d0d3; color: #333; font: inherit; }
      .on { border-color: #2b8ae0; background: #fff; }
      i { border: 3px solid transparent; border-top-color: #555; border-bottom: 0; }
      .text { padding: 0 5px; }
    </style>
    <span>X = -10100 Y = 5381 Z = 1349</span>
    <span>层高 : 3</span>
    <span>标高 : -3.05~-0.05</span>
    <span>2</span>
    <span>隐藏 :  0</span>
    <div class="tools">
      <button aria-label="正交"><bim-icon name="ortho"></bim-icon></button>
      <button class="on" aria-label="框选"><bim-icon name="box"></bim-icon><i></i></button>
      <button aria-label="交点"><bim-icon name="cross"></bim-icon></button>
      <button aria-label="角度"><bim-icon name="angle"></bim-icon><i></i></button>
      <button aria-label="偏移"><bim-icon name="plusbar"></bim-icon><i></i></button>
      <button class="text">跨图层选择</button>
      <button class="text">折线选择</button>
    </div>
    <span>按鼠标左键指定第一个角点，或拾取构件图元</span>`);

  define("task-strip", () => `
    <style>
      :host { display: flex; gap: 4px; height: 4px; padding-left: 52px; background: #274b9d; }
      i { box-sizing: border-box; width: 58px; border: 1px solid #8ba4da; border-bottom: 0; background: #4a6db8; }
      i:first-child { border-color: #e8eefc; }
    </style>
    <i></i><i></i><i></i><i></i>`);

  define("bim-app", () => `
    <style>
      :host { display: grid; grid-template-rows: auto auto auto minmax(0, 1fr) auto auto; grid-template-columns: minmax(0, 1fr); height: 100vh; }
    </style>
    <app-header></app-header>
    <app-ribbon></app-ribbon>
    <option-bar></option-bar>
    <work-area></work-area>
    <status-bar></status-bar>
    <task-strip></task-strip>`);
})();
</script>
</body>
</html>
